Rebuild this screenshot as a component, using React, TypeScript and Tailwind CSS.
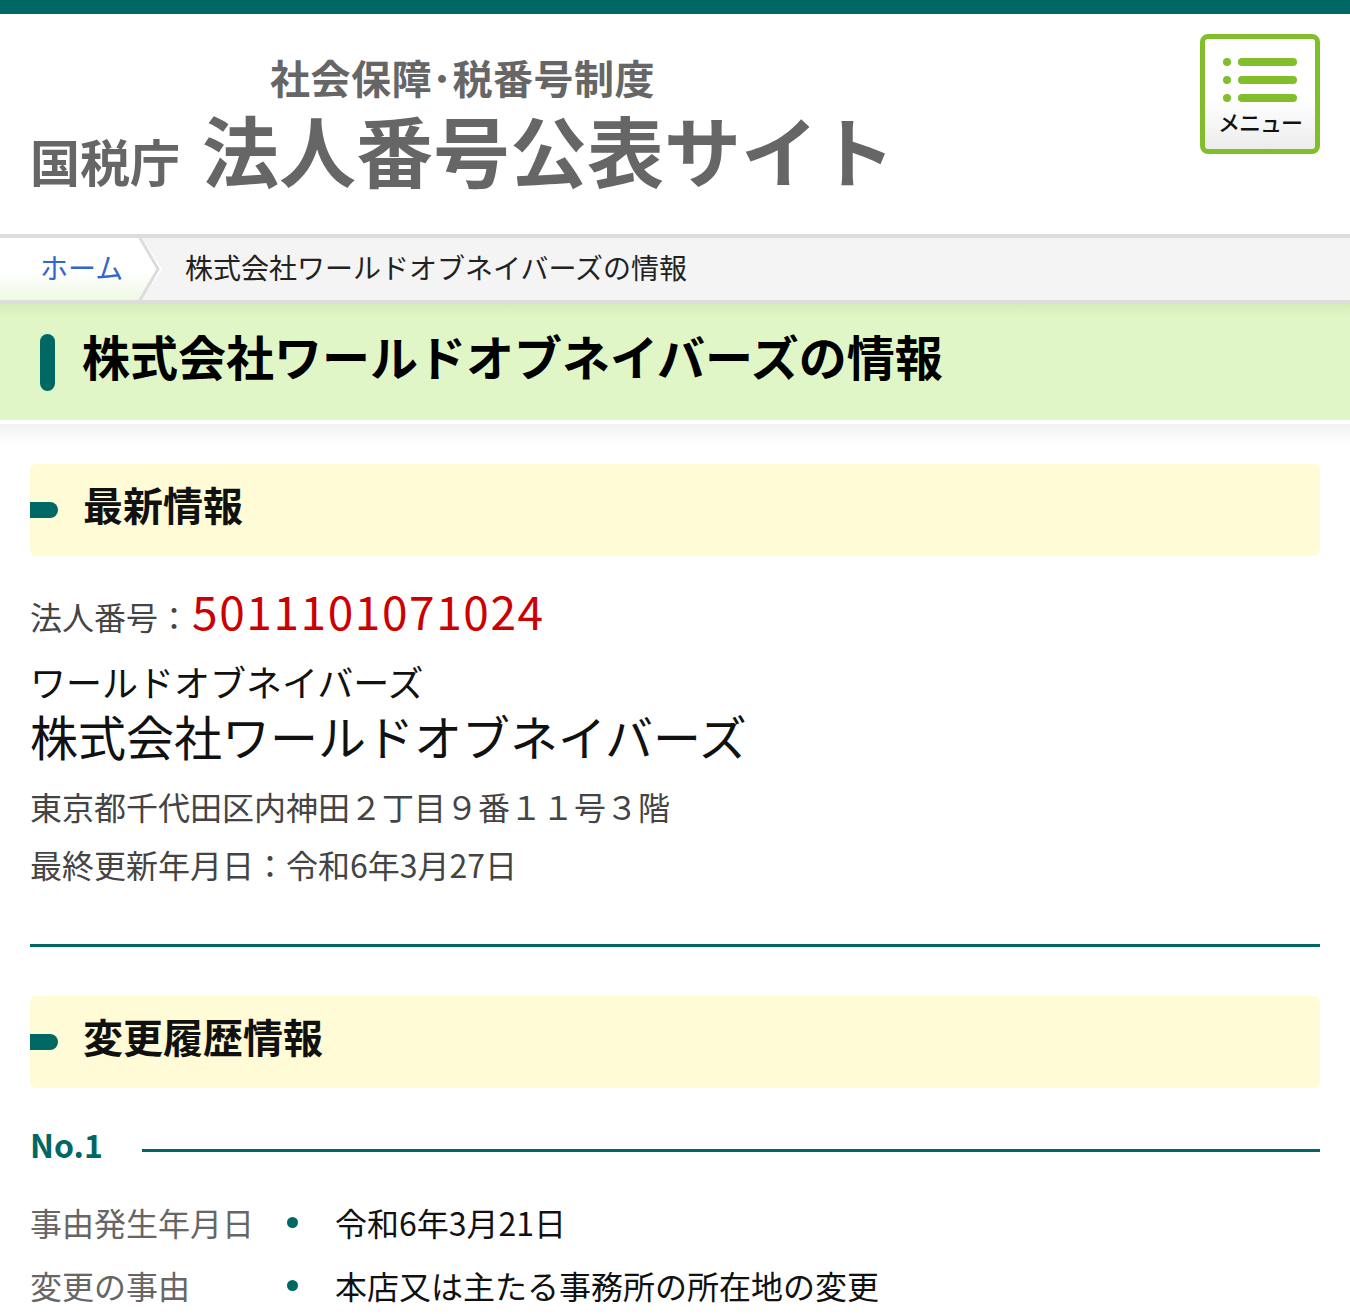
const jp = { fontFamily: '"Noto Sans CJK JP", "Noto Sans", sans-serif' };

function MenuButton() {
  return (
    <button
      type="button"
      className="mt-5 mr-[30px] flex h-[120px] w-[120px] shrink-0 flex-col items-center rounded-lg border-[5px] border-[#80bf2a] bg-[linear-gradient(#ffffff_0%,#ffffff_55%,#ececec_100%)]"
    >
      <div className="mt-[19px] flex flex-col gap-[10px]">
        {[0, 1, 2].map((i) => (
          <div key={i} className="flex items-center gap-[7px]">
            <span className="h-[8px] w-[8px] rounded-full bg-[#80bf2a]" />
            <span className="h-[8px] w-[59px] rounded-full bg-[#80bf2a]" />
          </div>
        ))}
      </div>
      <span className="mt-[4px] text-[22px] leading-[30px] font-medium tracking-[-1px] text-[#111]">メニュー</span>
    </button>
  );
}

function SectionHeading({ title }: { title: string }) {
  return (
    <div className="flex h-[92px] items-center rounded-md bg-[#fffbd6]">
      <span className="h-[16px] w-[28px] rounded-r-full bg-[#006864]" />
      <h3 className="-mt-[12px] ml-[25px] text-[40px] leading-[50px] font-bold text-[#111]">{title}</h3>
    </div>
  );
}

export default function App() {
  return (
    <div className="min-h-[1314px] w-full overflow-hidden bg-white" style={jp}>
      <div className="h-[14px] bg-[#006864]" />

      <header className="flex h-[220px] items-start justify-between">
        <div className="pt-[43px] pl-[30px] text-[#666]">
          <div className="pl-[240px] text-[40px] leading-[40px] font-bold tracking-[0.5px]">社会保障･税番号制度</div>
          <div className="mt-[16px] flex items-baseline gap-[22px]">
            <span className="text-[50px] leading-[72px] font-bold">国税庁</span>
            <span className="text-[77px] leading-[72px] font-bold">法人番号公表サイト</span>
          </div>
        </div>
        <MenuButton />
      </header>

      <nav className="flex h-[70px] border-y-4 border-[#dddddd] bg-[#f4f4f4]">
        <div className="relative flex w-[162px] items-center bg-[linear-gradient(#ffffff_0%,#ffffff_55%,#eef8e2_100%)] pl-[40px] [clip-path:polygon(0_0,142px_0,162px_50%,142px_100%,0_100%)]">
          <a className="-mt-[4px] text-[28px] leading-[40px] text-[#3366cc]">ホーム</a>
          <svg className="absolute top-0 right-0 h-full w-[24px]" viewBox="0 0 24 62" preserveAspectRatio="none">
            <polyline points="2,0 20,31 2,62" fill="none" stroke="#dcdcdc" strokeWidth="3" />
          </svg>
        </div>
        <div className="-mt-[4px] flex items-center pl-[23px] text-[28px] leading-[40px] text-[#222]">株式会社ワールドオブネイバーズの情報</div>
      </nav>

      <div className="flex h-[116px] items-center bg-[linear-gradient(#d6ecb8_0px,#e0f6c6_14px,#e0f6c6_100%)]">
        <span className="ml-[40px] h-[57px] w-[15px] rounded-full bg-[#006864]" />
        <h1 className="-mt-[14px] ml-[27px] text-[48px] leading-[60px] font-bold text-black">株式会社ワールドオブネイバーズの情報</h1>
      </div>
      <div className="mt-[4px] h-[22px] bg-[linear-gradient(#f2f2f2,#ffffff)]" />

      <main className="px-[30px] pt-[18px]">
        <SectionHeading title="最新情報" />

        <div className="mt-[26px] flex h-[56px] items-end">
          <span className="text-[32px] leading-[44px] text-[#444]">法人番号：</span>
          <span className="ml-[2px] text-[46px] leading-[56px] tracking-[1.6px] text-[#cc0000]">5011101071024</span>
        </div>
        <div className="mt-[20px] text-[36px] leading-[47px] text-[#111]">ワールドオブネイバーズ</div>
        <div className="text-[48px] leading-[60px] text-[#111]">株式会社ワールドオブネイバーズ</div>
        <div className="mt-[19px] text-[32px] leading-[44px] text-[#444]">東京都千代田区内神田２丁目９番１１号３階</div>
        <div className="mt-[14px] text-[32px] leading-[44px] text-[#444]">最終更新年月日：令和6年3月27日</div>

        <div className="mt-[58px] h-[3px] bg-[#006864]" />

        <div className="mt-[49px]">
          <SectionHeading title="変更履歴情報" />
        </div>

        <div className="mt-[40px] flex h-[44px] items-center">
          <span className="-mt-[12px] text-[32px] leading-[44px] font-bold text-[#006864]">No.1</span>
          <span className="ml-[39px] h-[3px] flex-1 bg-[#006864]" />
        </div>

        <dl className="mt-[28px] flex flex-col gap-[19px]">
          {[
            ['事由発生年月日', '令和6年3月21日'],
            ['変更の事由', '本店又は主たる事務所の所在地の変更'],
          ].map(([k, v]) => (
            <div key={k} className="flex h-[44px] items-center text-[32px] leading-[44px]">
              <dt className="w-[257px] text-[#666]">{k}</dt>
              <span className="h-[11px] w-[11px] rounded-full bg-[#006864]" />
              <dd className="ml-[37px] text-[#111]">{v}</dd>
            </div>
          ))}
        </dl>
      </main>
    </div>
  );
}
